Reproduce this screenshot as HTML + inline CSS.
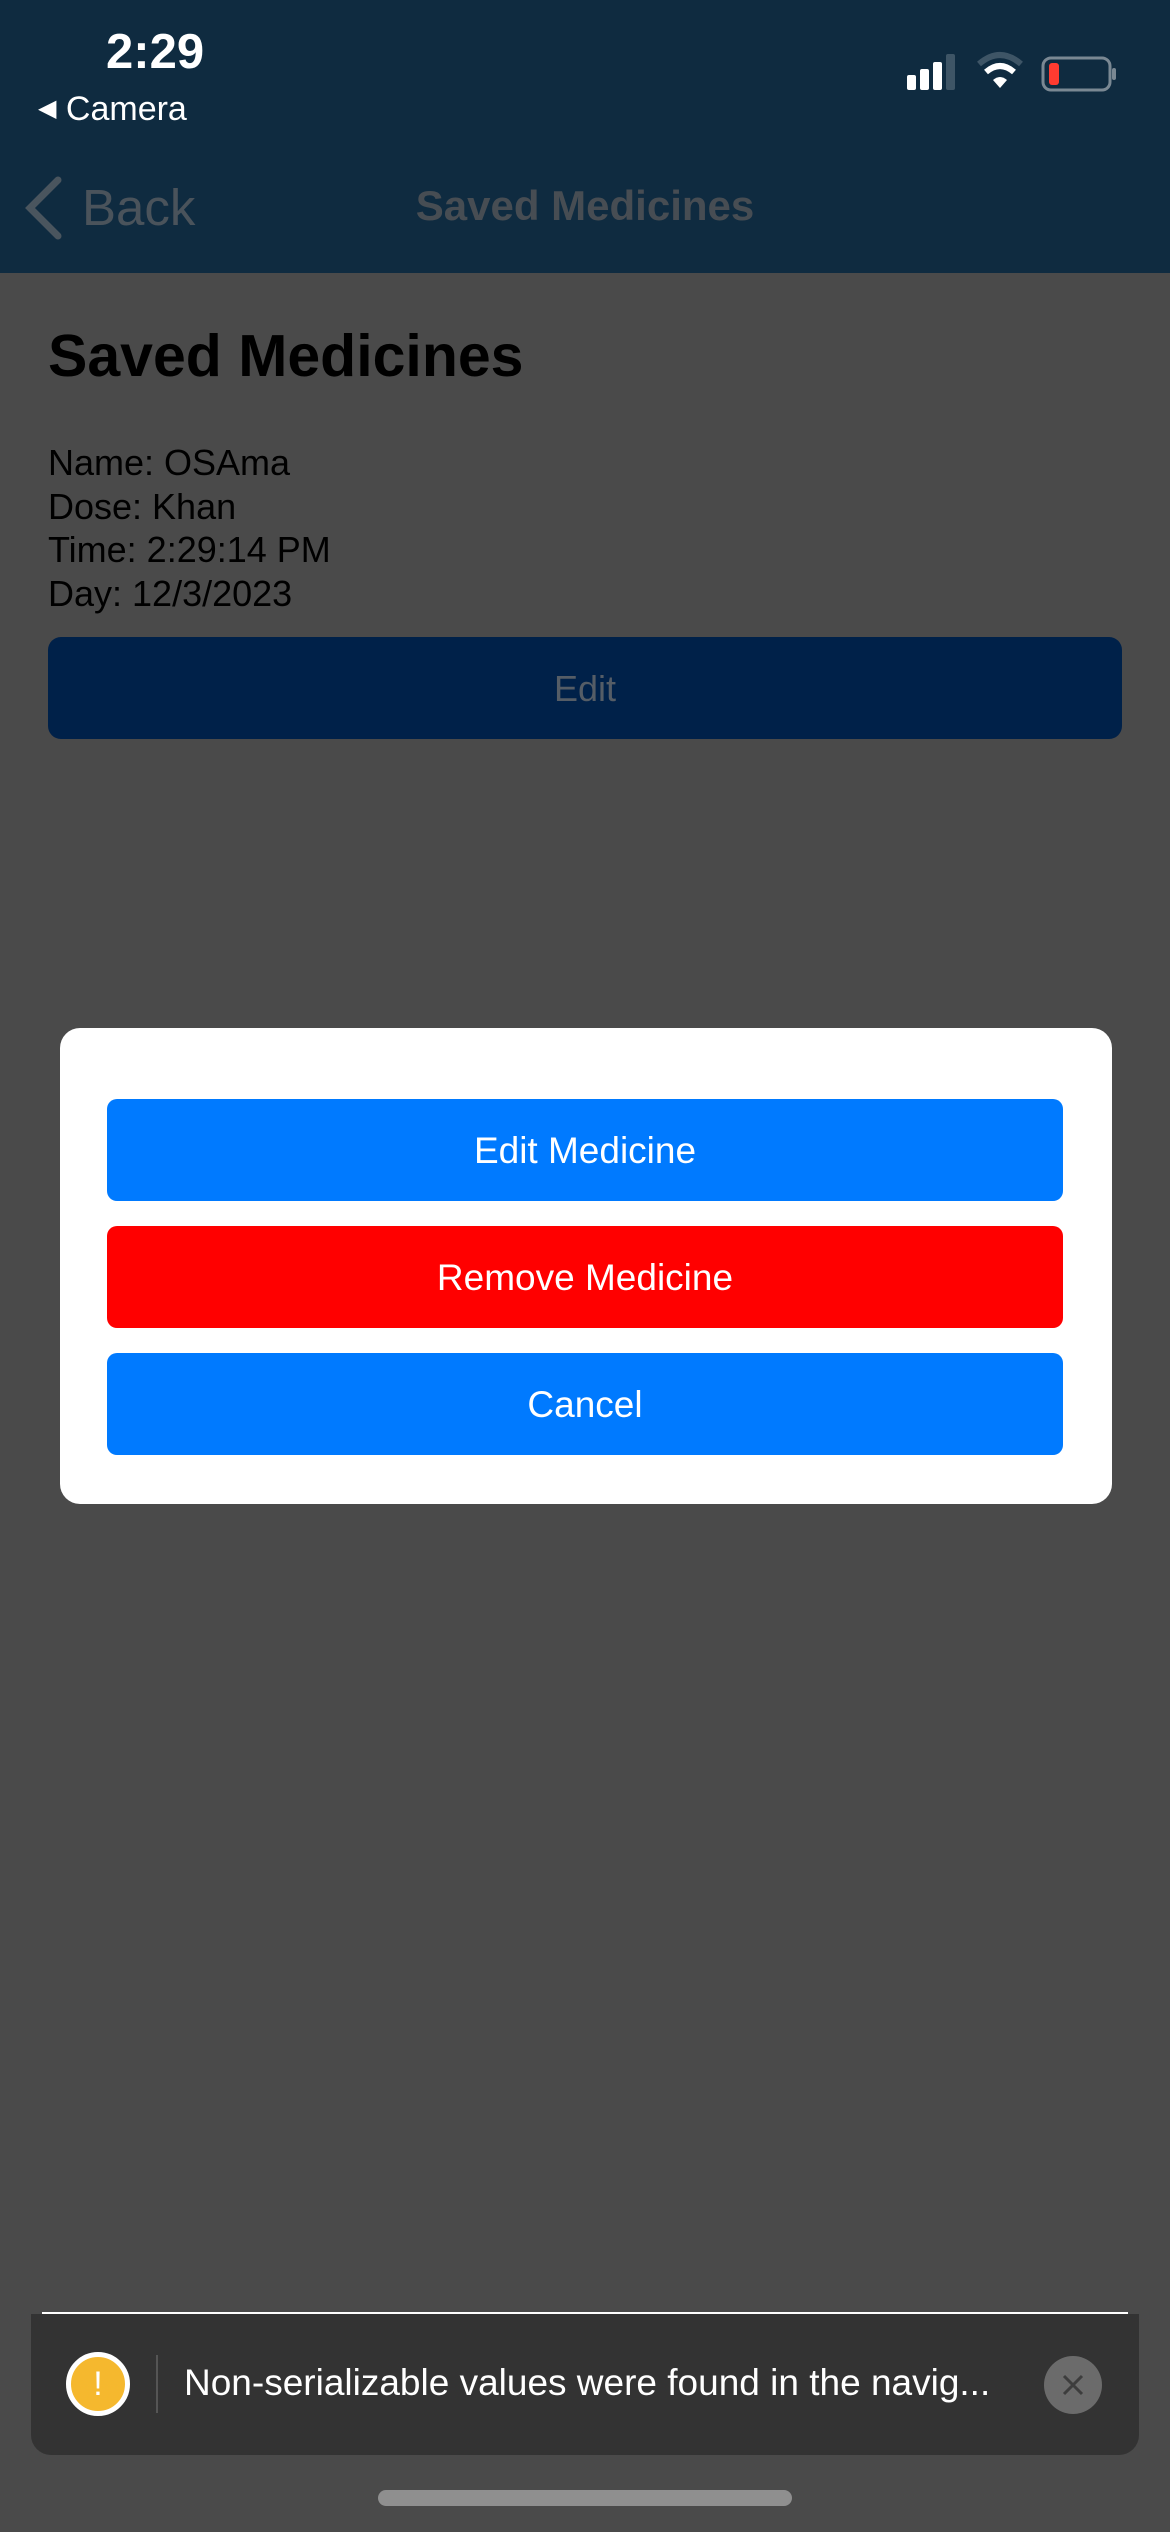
<!DOCTYPE html>
<html><head><meta charset="utf-8"><style>
*{margin:0;padding:0;box-sizing:border-box}
body{width:1170px;height:2532px;background:#4a4a4a;font-family:"Liberation Sans",sans-serif;position:relative;overflow:hidden}
.abs{position:absolute}
</style></head><body>
<div class="abs" style="left:0;top:0;width:1170px;height:273px;background:#0f2b40"></div>
<div class="abs" style="left:106px;top:24px;color:#fff;font-size:49px;font-weight:bold">2:29</div>
<div class="abs" style="left:38px;top:90px;color:#fff;font-size:34px"><span style="font-size:24px;vertical-align:4px">◀</span> Camera</div>
<svg class="abs" style="left:900px;top:50px" width="220" height="50">
<rect x="7" y="25" width="9" height="15" rx="2" fill="#fff"/>
<rect x="20" y="19" width="9" height="21" rx="2" fill="#fff"/>
<rect x="33" y="12" width="9" height="28" rx="2" fill="#fff"/>
<rect x="46" y="4" width="9" height="36" rx="2" fill="#3e5566"/>
<path d="M79 14 Q100 -4 121 14" stroke="#3e5566" stroke-width="6" fill="none"/>
<path d="M86 22 Q100 10 114 22" stroke="#fff" stroke-width="6" fill="none"/>
<path d="M93 30 L100 38 L107 30 Q100 24 93 30Z" fill="#fff"/>
<rect x="143" y="8" width="67" height="32" rx="8" stroke="#7a8893" stroke-width="3" fill="none"/>
<rect x="149" y="13" width="10" height="22" rx="3" fill="#ff3b30"/>
<rect x="212" y="18" width="4" height="12" rx="2" fill="#7a8893"/>
</svg>
<svg class="abs" style="left:20px;top:176px" width="50" height="64"><path d="M38 4 L10 32 L38 60" stroke="#4a555e" stroke-width="7" fill="none" stroke-linecap="round"/></svg>
<div class="abs" style="left:82px;top:178px;color:#4a535b;font-size:51px">Back</div>
<div class="abs" style="left:0;width:1170px;top:182px;text-align:center;color:#474d53;font-size:42px;font-weight:bold">Saved Medicines</div>
<div class="abs" style="left:48px;top:322px;color:#000;font-size:59px;font-weight:bold">Saved Medicines</div>
<div class="abs" style="left:48px;top:441px;color:#000;font-size:36px;line-height:43.5px">Name: OSAma<br>Dose: Khan<br>Time: 2:29:14 PM<br>Day: 12/3/2023</div>
<div class="abs" style="left:48px;top:637px;width:1074px;height:102px;background:#002149;border-radius:13px;color:#555d66;font-size:36px;text-align:center;line-height:104px">Edit</div>
<div class="abs" style="left:60px;top:1028px;width:1052px;height:476px;background:#fff;border-radius:20px"></div>
<div class="abs" style="left:107px;top:1099px;width:956px;height:102px;background:#007aff;border-radius:10px;color:#fff;font-size:37px;text-align:center;line-height:104px">Edit Medicine</div>
<div class="abs" style="left:107px;top:1226px;width:956px;height:102px;background:#ff0000;border-radius:10px;color:#fff;font-size:37px;text-align:center;line-height:104px">Remove Medicine</div>
<div class="abs" style="left:107px;top:1353px;width:956px;height:102px;background:#007aff;border-radius:10px;color:#fff;font-size:37px;text-align:center;line-height:104px">Cancel</div>
<div class="abs" style="left:42px;top:2312px;width:1086px;height:2px;background:#fff"></div>
<div class="abs" style="left:31px;top:2314px;width:1108px;height:141px;background:#333;border-radius:0 0 20px 20px"></div>
<div class="abs" style="left:66px;top:2352px;width:64px;height:64px;border-radius:50%;background:#f5b82e;border:5px solid #fff;color:#fff;font-size:34px;text-align:center;line-height:54px">!</div>
<div class="abs" style="left:156px;top:2355px;width:2px;height:58px;background:#555"></div>
<div class="abs" style="left:184px;top:2362px;color:#fff;font-size:37px;white-space:nowrap">Non-serializable values were found in the navig...</div>
<div class="abs" style="left:1044px;top:2356px;width:58px;height:58px;border-radius:50%;background:#6b6b6b"></div>
<svg class="abs" style="left:1044px;top:2356px" width="58" height="58"><path d="M20 20 L38 38 M38 20 L20 38" stroke="#3d3d3d" stroke-width="3"/></svg>
<div class="abs" style="left:378px;top:2490px;width:414px;height:16px;border-radius:8px;background:#8f8f8f"></div>
</body></html>
